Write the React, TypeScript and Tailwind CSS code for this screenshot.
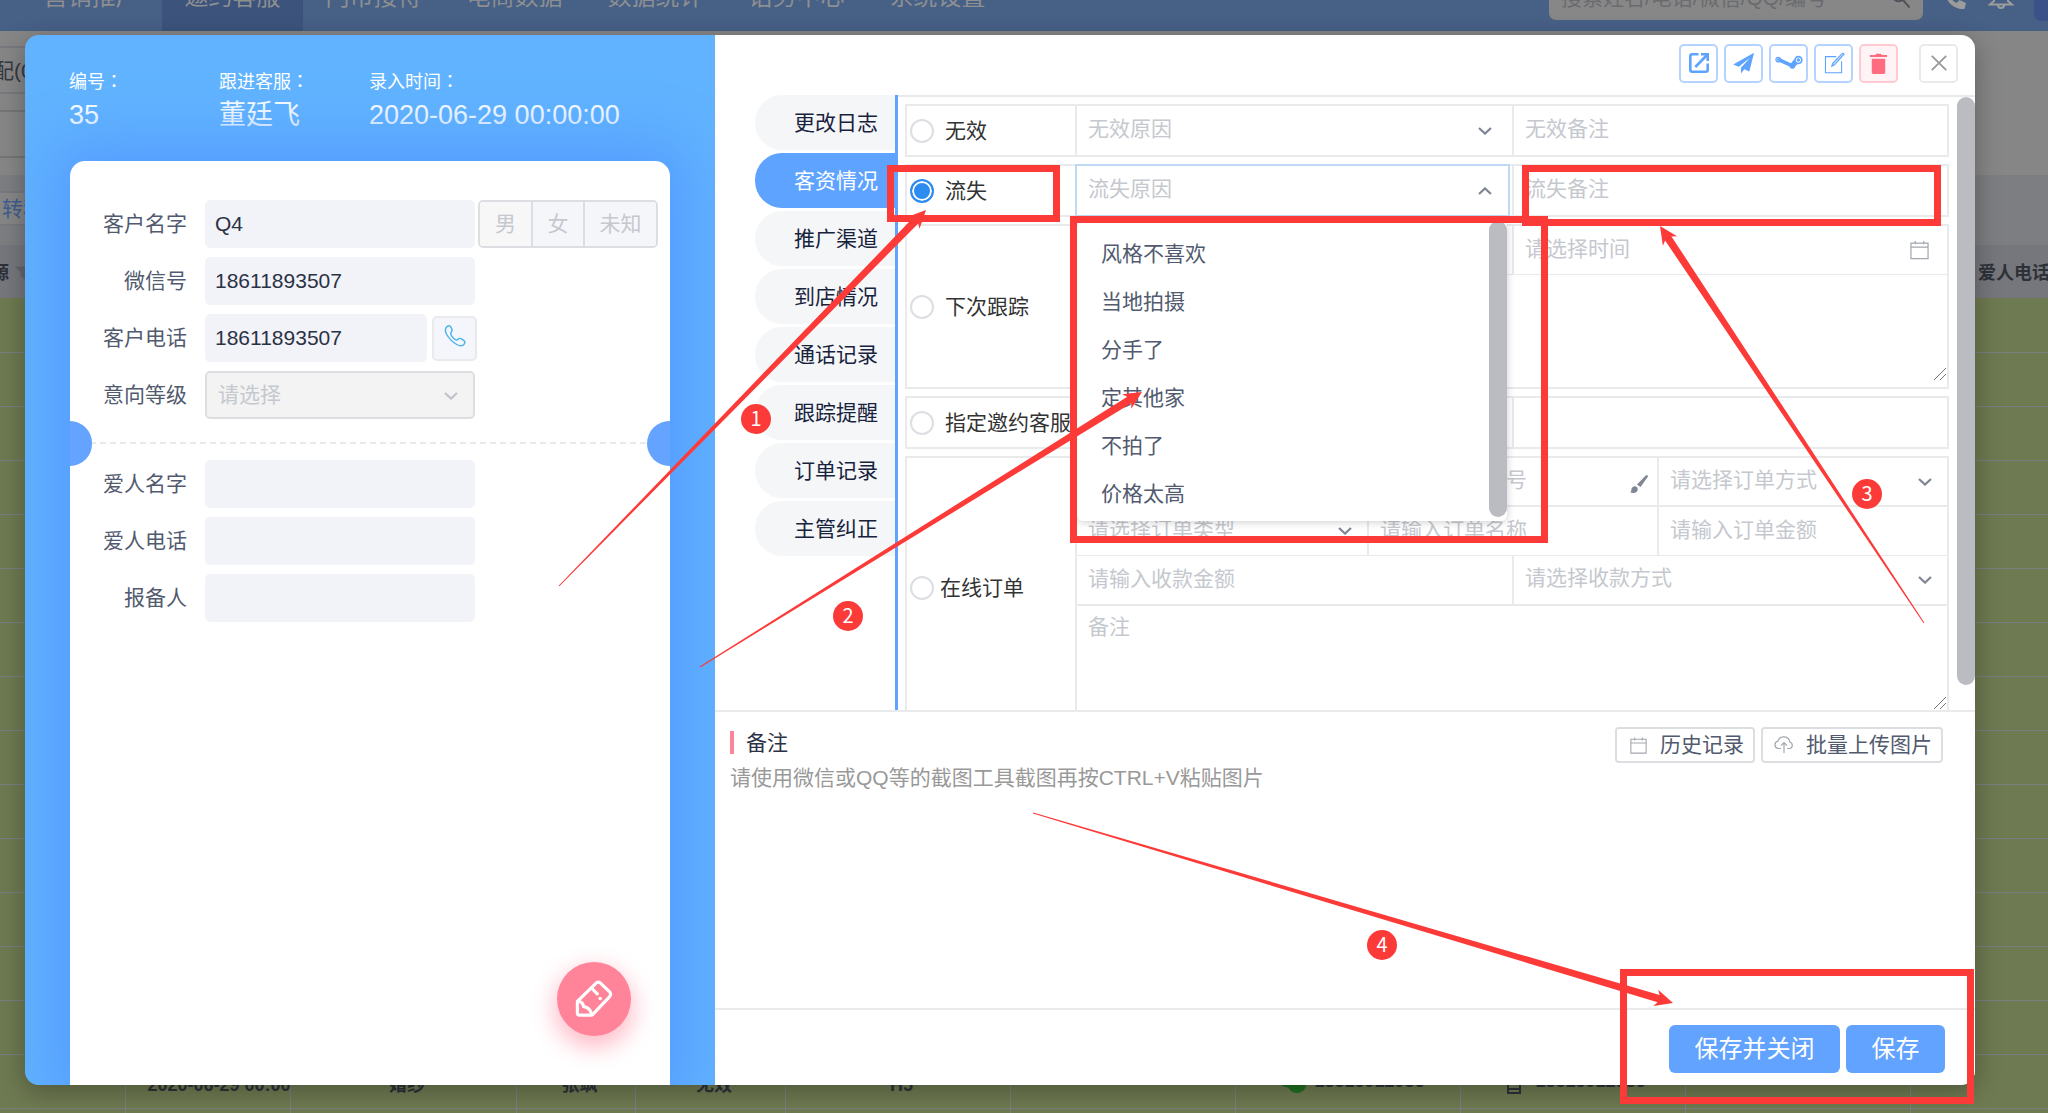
import React, { useState } from "react";

type IconProps = { className?: string };

const OpenIcon = ({ className }: IconProps) => (
  <svg viewBox="0 0 24 24" className={className} fill="none" stroke="currentColor" strokeWidth="2.6">
    <path d="M11.5 3.3H5.3a2 2 0 0 0-2 2v13.4a2 2 0 0 0 2 2h13.4a2 2 0 0 0 2-2v-6.2" />
    <path d="M14 3.3h6.7V10" />
    <path d="M20.5 3.5 8.3 16" />
  </svg>
);
const PlaneIcon = ({ className }: IconProps) => (
  <svg viewBox="0 0 24 24" className={className} fill="currentColor">
    <path d="M23.5.8.8 13.6l6.1 2.5L19.4 6 9.2 17.1v6.4l3.7-4.8 5.5 2.5z" />
  </svg>
);
const SteamIcon = ({ className }: IconProps) => (
  <svg viewBox="0 0 30 16" className={className} fill="none" stroke="currentColor">
    <circle cx="4.2" cy="4.600" r="2.3" strokeWidth="1.200" />
    <circle cx="4.2" cy="4.600" r="1.300" fill="currentColor" stroke="none" />
    <path d="M5.500 3 17 8.300 20 4.500 24 8.500 19.500 13.300 16.500 12 5 6.800z" fill="currentColor" stroke="none" />
    <circle cx="18.4" cy="11" r="2.800" fill="currentColor" stroke="none" />
    <circle cx="24.4" cy="5" r="3.400" strokeWidth="1.700" className="fill-white" />
    <circle cx="24.4" cy="5" r="1.700" fill="currentColor" stroke="none" />
  </svg>
);
const EditIcon = ({ className }: IconProps) => (
  <svg viewBox="0 0 24 24" className={className} fill="none" stroke="currentColor" strokeWidth="1.2">
    <path d="M14.5 5H2.7v17.6h17.6V10" />
    <path d="m9.6 15.4 1-3L21 1.6q1.3-.6 2 .8L12.600 14z" fill="currentColor" fillOpacity=".35" />
  </svg>
);
const TrashIcon = ({ className }: IconProps) => (
  <svg viewBox="0 0 24 24" className={className} fill="currentColor">
    <path d="M5 7h14v14a2 2 0 0 1-2 2H7a2 2 0 0 1-2-2z" />
    <path d="M3 3h5.400L9.800 1.700h4.400L15.600 3H21v2.300H3z" />
  </svg>
);
const CloseIcon = ({ className }: IconProps) => (
  <svg viewBox="0 0 16 16" className={className} fill="none" stroke="currentColor" strokeWidth="1.8">
    <path d="m.8.8 14.400 14.400M15.200.8.8 15.200" />
  </svg>
);
const Chevron = ({ up = false, className = "" }: { up?: boolean; className?: string }) => (
  <svg viewBox="0 0 14 8" className={`pointer-events-none absolute h-[8px] w-[14px] ${className}`} fill="none" stroke="currentColor" strokeWidth="2.2">
    <path d={up ? "M1 7l6-5.600L13 7" : "M1 1l6 5.600L13 1"} />
  </svg>
);
const CalendarIcon = ({ className }: IconProps) => (
  <svg viewBox="0 0 20 20" className={className} fill="none" stroke="currentColor" strokeWidth="1.300">
    <path d="M1 2.700h18v16.300H1zM1 7h18M5.500.5v3.500M14.500.5v3.500" />
  </svg>
);
const UploadIcon = ({ className }: IconProps) => (
  <svg viewBox="0 0 20 18" className={className} fill="none" stroke="currentColor" strokeWidth="1.200">
    <path d="M7 12.500H4.500A3.700 3.700 0 0 1 3.900 5.200 6.200 6.200 0 0 1 15.900 6a3.400 3.400 0 0 1 0 6.500H13" />
    <path d="M10 17V7M7 9.700 10 6.700l3 3" />
  </svg>
);
const PhoneOutline = ({ className }: IconProps) => (
  <svg viewBox="0 0 22 22" className={className} fill="none" stroke="currentColor" strokeWidth="1.400">
    <path d="M3.600 1.200C5.300.2 6.300 1 7.300 2.800 8.400 4.800 8.700 5.600 7.500 6.800 6.300 8 6.200 8.700 7.600 10.900c1.200 1.900 2.400 3 3.800 3.800 1.200.7 1.900.4 2.900-.7.900-1 1.900-.9 3.500.1l2.200 1.500c1.500 1.100 1 2.700-.4 4.100-1.600 1.600-3.900 1.400-6.800-.2C8.600 17.200 4.500 13 2.300 8.800.9 5.600.9 2.900 3.600 1.200z" />
  </svg>
);
const BrushIcon = ({ className }: IconProps) => (
  <svg viewBox="0 0 20 20" className={className} fill="currentColor">
    <path d="M8 10.500 17 1.300q1.700-.6 2.200 1L11.500 13zM1 18.300c1.700-.5 1-2.300 1.700-4 1.300-3 5.300-2.700 6 .300.600 3.600-3.300 5.500-7.700 3.700z" />
  </svg>
);
const PencilIcon = ({ className }: IconProps) => (
  <svg viewBox="0 0 40 40" className={className} fill="none" stroke="currentColor" strokeWidth="3.300" strokeLinejoin="round" strokeLinecap="round">
    <path d="M2.500 22.500 22.500 3q2-1.600 4 0L36.500 12.500q2 2.500 0 5L18 37H4.500q-2 0-2-2z" />
    <path d="M3.500 22.500q5 .5 5.500 5.500 6 .5 8.500 7.500M17.500 8.500l6 6" />
    <circle cx="26.500" cy="19.500" r="1.900" fill="currentColor" stroke="none" />
  </svg>
);
const Grip = () => (
  <svg viewBox="0 0 14 14" className="pointer-events-none absolute right-0 bottom-0 h-[14px] w-[14px] text-[#777]" fill="none" stroke="currentColor" strokeWidth="1">
    <path d="M1 13 13 1M7 13l6-6" />
  </svg>
);

/* ---------- dimmed page behind the dialog ---------- */

const NAV = ["营销推广", "邀约客服", "门市接待", "电商数据", "数据统计", "话务中心", "系统设置"];
const COLS = ["w-[125px]", "w-[165px]", "w-[226px]", "w-[119px]", "w-[150px]", "w-[225px]", "w-[225px]", "w-[225px]", "w-[225px]", "w-[225px]", "w-auto"];

function BackPage() {
  return (
    <div className="flex h-full flex-col bg-[#868686] *:shrink-0">
      <header className="flex h-[31px] items-end justify-between overflow-hidden bg-[#476086] pl-[21px]">
        <nav className="-mt-[38px] flex">
          {NAV.map((n, i) => (
            <a key={n} href="#" className={`flex h-[69px] w-[141px] items-center justify-center text-[24px] text-[#8d8f91] ${i === 1 ? "bg-[#3c547c]" : ""}`}>
              {n}
            </a>
          ))}
        </nav>
        <div className="flex items-end">
          <div className="mb-[11px] flex h-[44px] w-[374px] items-center justify-between rounded-[7px] bg-[#878787] px-[12px]">
            <input aria-label="搜索" placeholder="搜索姓名/电话/微信/QQ/编号" className="w-[300px] text-[21px] placeholder:text-[#696b6e]" />
            <svg viewBox="0 0 20 20" className="h-[19px] w-[19px] text-[#4b4e55]" fill="none" stroke="currentColor" strokeWidth="2">
              <circle cx="7" cy="7" r="6" />
              <path d="m11.500 11.500 7 8" />
            </svg>
          </div>
          <svg viewBox="0 0 24 24" className="mb-[21px] ml-[20px] h-[24px] w-[24px] text-[#9c9c9c]" fill="currentColor">
            <path d="M2 2.500 7 1l3 6-3 3c1 3 3.500 5.500 6.500 7l3-3 6.500 3-1.500 6C10 24 1 14 2 2.500z" />
          </svg>
          <svg viewBox="0 0 24 24" className="mb-[21px] ml-[20px] h-[24px] w-[28px] text-[#9c9c9c]" fill="none" stroke="currentColor" strokeWidth="2">
            <path d="M1 18.500h22L19 15V9a7 7 0 0 0-14 0v6zM9 19a3 3 0 0 0 6 0" />
          </svg>
          <div className="mb-[10px] ml-[19px] h-[44px] w-[14px] rounded-l-[7px] bg-[#3a5288]" />
        </div>
      </header>
      <div className="mr-[100px] h-[63px] border-b-2 border-[#77797c] pt-[15px]">
        <div className="h-full overflow-hidden border-t-2 border-[#77797c] text-[21px] leading-[46px] whitespace-nowrap text-[#35383e]">
          <span className="-ml-[7px]">配(0)</span>
        </div>
      </div>
      <div className="mt-[16px] mr-[100px] h-[48px] border-y-2 border-[#757575]" />
      <div className="mt-[17px] h-[16px] bg-[#7d7e81]" />
      <div className="flex h-[35px]">
        <div className="flex-1 border-y-2 border-[#77797c] pl-[2px] text-[21px] leading-[32px] text-[#3f5d8f]">转移</div>
        <div className="w-[100px] bg-[#7d7e81]" />
      </div>
      <div className="h-[19px] bg-[#7d7e81]" />
      <table className="w-full table-fixed border-collapse text-[18px] font-bold text-[#2d3138]">
        <colgroup>
          {COLS.map((c, i) => (
            <col key={i} className={c} />
          ))}
        </colgroup>
        <thead>
          <tr className="h-[53px] bg-[#76777c]">
            {COLS.map((_, i) => (
              <th key={i} className="overflow-visible p-0 pt-[3px] text-left whitespace-nowrap">
                {i === 0 && (
                  <span className="-ml-[9px] flex items-center gap-[6px]">
                    源
                    <svg viewBox="0 0 20 16" className="h-[14px] w-[16px] text-[#66676b]" fill="currentColor">
                      <path d="M0 0h20l-7 7v9l-6-4V7z" />
                    </svg>
                  </span>
                )}
                {i === 10 && <span className="pl-[68px]">爱人电话</span>}
              </th>
            ))}
          </tr>
        </thead>
        <tbody>
          {Array.from({ length: 16 }, (_, r) => (
            <tr key={r} className="h-[54px] bg-[#6e7a51]">
              {["", "2020-06-29 00:00", "婚纱", "张飒", "无效", "H5", "", "18515912986", "18515912986", "", ""].map((t, i) => (
                <td key={i} className={`overflow-visible border-b border-[#7c7d80] p-0 pt-[8px] text-center whitespace-nowrap ${i === 1 ? "pl-[22px]" : "pl-[8px]"} ${i < 10 ? "border-r" : ""}`}>
                  {r === 14 && (
                    <span className="inline-flex items-center gap-[8px]">
                      {i === 7 && (
                        <svg viewBox="0 0 28 24" className="h-[24px] w-[28px] text-[#206f20]" fill="currentColor">
                          <ellipse cx="10" cy="9" rx="10" ry="8.500" />
                          <ellipse cx="19" cy="15" rx="9" ry="8" />
                        </svg>
                      )}
                      {i === 8 && (
                        <svg viewBox="0 0 14 24" className="mr-[6px] h-[24px] w-[14px] text-[#2d3138]" fill="none" stroke="currentColor" strokeWidth="2">
                          <path d="M1 1h12v22H1zM1 19h12" />
                        </svg>
                      )}
                      {t}
                    </span>
                  )}
                </td>
              ))}
            </tr>
          ))}
        </tbody>
      </table>
    </div>
  );
}

/* ---------- left customer card ---------- */

const FIELD = "h-[48px] rounded-[5px] bg-[#f2f3f8] px-[10px] text-[21px] text-[#2b3245]";

function FormRow({ label, id, children }: { label: string; id: string; children: React.ReactNode }) {
  return (
    <div className="flex h-[48px] items-center">
      <label htmlFor={id} className="w-[117px] shrink-0 text-right text-[21px] text-[#515a6e]">
        {label}
      </label>
      <div className="ml-[18px] flex items-center">{children}</div>
    </div>
  );
}

function CustomerPanel() {
  return (
    <aside className="flex w-[690px] shrink-0 flex-col overflow-hidden rounded-l-[14px] bg-[#61b3ff] pt-[31px] pr-[45px] pl-[44px]">
      <dl className="flex text-white">
        {[
          ["编号", "35"],
          ["跟进客服", "董廷飞"],
          ["录入时间", "2020-06-29 00:00:00"],
        ].map(([k, v]) => (
          <div key={k} className="w-[150px] whitespace-nowrap">
            <dt className="h-[29px] text-[18px] leading-[29px]">
              {k}
              <span className="font-['Noto_Sans_CJK_TC',sans-serif]">：</span>
            </dt>
            <dd className="h-[40px] text-[27px] leading-[40px]">{v}</dd>
          </div>
        ))}
      </dl>
      <div className="relative mt-[26px] ml-px flex-1 rounded-t-[15px] bg-white pt-[39px] shadow-[0_0_55px_20px_#559dff]">
        <div className="flex flex-col gap-[9px]">
          <FormRow label="客户名字" id="name">
            <input id="name" defaultValue="Q4" className={`${FIELD} w-[270px]`} />
            <div className="ml-[3px] flex h-[48px] w-[180px] overflow-hidden rounded-[5px] border-2 border-[#dcdee2] text-[21px] text-[#c5c8ce]">
              <button className="w-[51px] bg-[#f7f7f7]">男</button>
              <button className="w-[54px] border-x-2 border-[#dcdee2] bg-[#f5f6fa]">女</button>
              <button className="flex-1 bg-[#f5f6fa]">未知</button>
            </div>
          </FormRow>
          <FormRow label="微信号" id="wechat">
            <input id="wechat" defaultValue="18611893507" className={`${FIELD} w-[270px]`} />
          </FormRow>
          <FormRow label="客户电话" id="phone">
            <input id="phone" defaultValue="18611893507" className={`${FIELD} w-[222px]`} />
            <button aria-label="拨打" className="ml-[5px] flex h-[45px] w-[45px] items-center justify-center rounded-[5px] border-2 border-[#e8eaec] bg-[#f5f6fb] pb-[4px] text-[#46b4ea]">
              <PhoneOutline className="h-[22px] w-[22px]" />
            </button>
          </FormRow>
          <FormRow label="意向等级" id="level">
            <div className="relative">
              <select id="level" className="h-[48px] w-[270px] appearance-none rounded-[5px] border-2 border-[#dcdee2] bg-[#f3f3f3] px-[11px] text-[21px] text-[#c5c8ce]">
                <option>请选择</option>
              </select>
              <Chevron className="top-[21px] right-[17px] text-[#c0c3c9]" />
            </div>
          </FormRow>
        </div>
        <div className="h-[41px] pt-[23px]">
          <div className="h-[2px] w-full bg-[repeating-linear-gradient(90deg,#e8eaec_0_6px,transparent_6px_10px)]" />
        </div>
        <div className="absolute top-[260px] left-0 h-[45px] w-[22px] rounded-r-full bg-[#64a3ff]" />
        <div className="absolute top-[260px] right-0 h-[45px] w-[23px] rounded-l-full bg-[#64a3ff]" />
        <div className="flex flex-col gap-[9px]">
          <FormRow label="爱人名字" id="lover">
            <input id="lover" className={`${FIELD} w-[270px]`} />
          </FormRow>
          <FormRow label="爱人电话" id="loverPhone">
            <input id="loverPhone" className={`${FIELD} w-[270px]`} />
          </FormRow>
          <FormRow label="报备人" id="reporter">
            <input id="reporter" className={`${FIELD} w-[270px]`} />
          </FormRow>
        </div>
        <button aria-label="编辑" className="absolute right-[39px] bottom-[49px] flex h-[74px] w-[74px] items-center justify-center rounded-full bg-[#ff8399] text-white shadow-[0_9px_24px_2px_#ffb8c5]">
          <PencilIcon className="h-[38px] w-[38px]" />
        </button>
      </div>
    </aside>
  );
}

/* ---------- status form ---------- */

const TABS = ["更改日志", "客资情况", "推广渠道", "到店情况", "通话记录", "跟踪提醒", "订单记录", "主管纠正"];
const OPTIONS = ["风格不喜欢", "当地拍摄", "分手了", "定其他家", "不拍了", "价格太高"];
const LINE = "border-[#e8eaec]";
const TEXT = "text-[21px] placeholder:text-[#c5c8ce]";

function Pick({ label, className = "", arrow = "right-[20px]", up = false }: { label: string; className?: string; arrow?: string; up?: boolean }) {
  return (
    <div className={`relative min-w-0 ${LINE} ${className}`}>
      <select aria-label={label} className="h-full w-full appearance-none bg-transparent px-[11px] pb-[4px] text-[21px] text-[#c5c8ce]">
        <option>{label}</option>
      </select>
      <Chevron up={up} className={`top-[50%] -mt-[4px] text-[#808695] ${arrow}`} />
    </div>
  );
}

function Entry({ label, className = "" }: { label: string; className?: string }) {
  return <input aria-label={label || "备注"} placeholder={label} className={`h-full w-full min-w-0 px-[11px] pb-[3px] ${TEXT} ${LINE} ${className}`} />;
}

function StatusRow({ label, checked, onPick, height, tight = false, children }: { label: string; checked: boolean; onPick: () => void; height: string; tight?: boolean; children: React.ReactNode }) {
  return (
    <div className={`flex shrink-0 border-2 ${LINE} ${height}`}>
      <label className={`flex w-[168px] shrink-0 items-center pl-[3px] text-[21px] whitespace-nowrap text-[#333] ${tight ? "gap-[6px]" : "gap-[11px]"}`}>
        <input
          type="radio"
          name="status"
          checked={checked}
          onChange={onPick}
          className="h-[24px] w-[24px] shrink-0 appearance-none rounded-full border-2 border-[#dcdee2] bg-white checked:border-[#2d8cf0] checked:bg-[#2d8cf0] checked:shadow-[inset_0_0_0_2px_white]"
        />
        {label}
      </label>
      <div className={`min-w-0 flex-1 border-l-2 ${LINE}`}>{children}</div>
    </div>
  );
}

function StatusForm() {
  const [status, setStatus] = useState("流失");
  const row = (label: string) => ({ label, checked: status === label, onPick: () => setStatus(label) });
  return (
    <div className="flex min-h-0 min-w-0 flex-1 overflow-hidden border-t-2 border-[#e8eaec]">
      <div className="flex min-w-0 flex-1 flex-col gap-[7px] pt-[7px] pr-[8px] pl-[7px]">
        <StatusRow {...row("无效")} height="h-[53px]">
          <div className="grid h-full grid-cols-2">
            <Pick label="无效原因" />
            <Entry label="无效备注" className="border-l-2" />
          </div>
        </StatusRow>
        <StatusRow {...row("流失")} height="h-[53px]">
          <div className="grid h-full grid-cols-2">
            <div className="relative grid min-w-0 pr-[4px]">
              <Pick label="流失原因" up arrow="right-[16px]" className="ring-2 ring-[#bfd9f5]" />
              <ul role="listbox" aria-label="流失原因" className="absolute top-[55px] right-[5px] left-0 z-10 h-[300px] rounded-[6px] bg-white pt-[9px] text-[21px] leading-[48px] text-[#515a6e] shadow-[0_1px_9px_rgba(0,0,0,.2)]">
                {OPTIONS.map((o) => (
                  <li key={o} role="option" aria-selected={false} className="px-[24px]">
                    {o}
                  </li>
                ))}
                <li aria-hidden className="absolute top-0 right-0 h-[296px] w-[18px] rounded-full bg-[#bbbcc1]" />
              </ul>
            </div>
            <Entry label="流失备注" className="border-l-2" />
          </div>
        </StatusRow>
        <StatusRow {...row("下次跟踪")} height="h-[165px]">
          <div className={`grid h-[49px] grid-cols-2 border-b ${LINE}`}>
            <Pick label="跟踪方式" />
            <div className={`relative min-w-0 border-l-2 ${LINE}`}>
              <Entry label="请选择时间" />
              <CalendarIcon className="absolute top-[14px] right-[18px] h-[20px] w-[19px] text-[#a3a7b0]" />
            </div>
          </div>
          <div className="relative h-[106px]">
            <textarea aria-label="跟踪备注" className="h-full w-full resize-none px-[11px]" />
            <Grip />
          </div>
        </StatusRow>
        <StatusRow {...row("指定邀约客服")} height="h-[53px]">
          <div className="grid h-full grid-cols-2">
            <Pick label="邀约客服" />
            <Entry label="" className="border-l-2" />
          </div>
        </StatusRow>
        <StatusRow {...row("在线订单")} height="h-[264px]" tight>
          <div className={`grid h-[49px] grid-cols-3 border-b-2 ${LINE}`}>
            <Pick label="请选择套系" />
            <div className={`relative min-w-0 border-l-2 ${LINE}`}>
              <Entry label="请输入订单编号" />
              <BrushIcon className="absolute top-[16px] right-[8px] h-[20px] w-[20px] text-[#808695]" />
            </div>
            <Pick label="请选择订单方式" arrow="right-[15px]" className="border-l-2" />
          </div>
          <div className={`grid h-[49px] grid-cols-3 border-b ${LINE}`}>
            <Pick label="请选择订单类型" arrow="right-[15px]" />
            <Entry label="请输入订单名称" className="border-l-2" />
            <Entry label="请输入订单金额" className="border-l-2" />
          </div>
          <div className={`grid h-[50px] grid-cols-2 border-b-2 ${LINE}`}>
            <Entry label="请输入收款金额" />
            <Pick label="请选择收款方式" arrow="right-[15px]" className="border-l-2" />
          </div>
          <div className="relative h-[104px]">
            <textarea aria-label="备注" placeholder="备注" className={`h-full w-full resize-none px-[11px] pt-[5px] ${TEXT}`} />
            <Grip />
          </div>
        </StatusRow>
      </div>
      <div className="w-[18px] shrink-0">
        <div className="h-[588px] w-full rounded-full bg-[#bbbcc1]" />
      </div>
    </div>
  );
}

const TOOL = "flex h-[39px] w-[39px] items-center justify-center rounded-[5px] border-2";
const BLUE = "border-[#b4d3ff] text-[#5ea3ff]";
const SMALL = "flex h-[36px] items-center justify-between rounded-[4px] border-2 border-[#dcdee2] pr-[9px] text-[21px] text-[#515a6e]";

function DetailPanel() {
  return (
    <section className="flex min-w-0 flex-1 flex-col overflow-hidden rounded-r-[14px] bg-white">
      <div className="flex h-[60px] shrink-0 items-center justify-end gap-[6px] pr-[17px] pb-[4px]">
        <button aria-label="打开" className={`${TOOL} ${BLUE}`}><OpenIcon className="h-[24px] w-[24px]" /></button>
        <button aria-label="发送" className={`${TOOL} ${BLUE}`}><PlaneIcon className="h-[22px] w-[23px]" /></button>
        <button aria-label="分配" className={`${TOOL} ${BLUE}`}><SteamIcon className="h-[16px] w-[30px] shrink-0" /></button>
        <button aria-label="修改" className={`${TOOL} ${BLUE}`}><EditIcon className="h-[22px] w-[22px]" /></button>
        <button aria-label="删除" className={`${TOOL} border-[#ffc9d1] bg-[#fff3f5] text-[#ff6b80]`}><TrashIcon className="h-[23px] w-[23px]" /></button>
        <button aria-label="关闭" className={`${TOOL} ml-[15px] border-[#e8eaec] text-[#999]`}><CloseIcon className="h-[16px] w-[16px]" /></button>
      </div>
      <div className="flex min-h-0 flex-1">
        <div role="tablist" className="flex w-[183px] shrink-0 flex-col gap-[3px] border-r-3 border-[#5ea3ff] pl-[40px]">
          {TABS.map((t, i) => (
            <button
              key={t}
              role="tab"
              aria-selected={i === 1}
              className={`h-[55px] shrink-0 rounded-l-[27px] pr-[17px] text-right text-[21px] ${i === 1 ? "bg-[#5ea3ff] text-white" : "bg-[#f5f6f8] text-[#17233d]"}`}
            >
              {t}
            </button>
          ))}
        </div>
        <StatusForm />
      </div>
      <div className="h-[298px] shrink-0 border-t-2 border-[#e8eaec] pt-[15px] pr-[32px] pl-[15px]">
        <div className="flex h-[36px] justify-between">
          <h2 className="mt-[4px] flex h-[23px] items-center border-l-4 border-[#ff8399] pl-[12px] text-[21px] text-[#2b3245]">备注</h2>
          <div className="flex gap-[6px]">
            <button className={`${SMALL} w-[140px] pl-[13px]`}>
              <CalendarIcon className="h-[17px] w-[17px] text-[#a3a7b0]" />
              历史记录
            </button>
            <button className={`${SMALL} w-[182px] pl-[11px]`}>
              <UploadIcon className="h-[18px] w-[20px] text-[#a3a7b0]" />
              批量上传图片
            </button>
          </div>
        </div>
        <p className="text-[21px] leading-[30px] text-[#999]">请使用微信或QQ等的截图工具截图再按CTRL+V粘贴图片</p>
      </div>
      <footer className="flex h-[77px] shrink-0 justify-end gap-[6px] border-t-2 border-[#e8eaec] pt-[15px] pr-[30px] text-[24px] text-white">
        <button className="h-[48px] w-[171px] rounded-[6px] bg-[#62a3ff]">保存并关闭</button>
        <button className="h-[48px] w-[99px] rounded-[6px] bg-[#62a3ff]">保存</button>
      </footer>
    </section>
  );
}

/* ---------- tutorial marks drawn over the dialog ---------- */

const ARROWS = [
  [559, 586, 926, 210],
  [700, 667, 1142, 392],
  [1924, 623, 1660, 226],
  [1033, 813, 1673, 1003],
];
const BOXES = [
  [887, 165, 173, 57],
  [1070, 216, 478, 327],
  [1522, 165, 419, 61],
  [1620, 969, 354, 135],
];
const BADGES = [
  [756, 419],
  [848, 616],
  [1867, 494],
  [1382, 945],
];

function arrowPoints([x1, y1, x2, y2]: number[]) {
  const len = Math.hypot(x2 - x1, y2 - y1);
  const ux = (x2 - x1) / len;
  const uy = (y2 - y1) / len;
  const at = (back: number, side: number) => `${x2 - ux * back - uy * side},${y2 - uy * back + ux * side}`;
  return [at(len, 0.5), at(15, 3.8), at(18, 8.5), at(0, 0), at(18, -8.5), at(15, -3.8), at(len, -0.5)].join(" ");
}

function Marks() {
  return (
    <svg className="pointer-events-none absolute top-0 left-0 z-20 h-[1113px] w-[2048px]" viewBox="0 0 2048 1113">
      {BOXES.map(([x, y, w, h]) => (
        <rect key={`${x}`} x={x + 3.5} y={y + 3.5} width={w - 7} height={h - 7} fill="none" stroke="#fc3a38" strokeWidth="7" />
      ))}
      {ARROWS.map((a) => (
        <polygon key={a.join()} points={arrowPoints(a)} fill="#fc3a38" />
      ))}
      {BADGES.map(([x, y], i) => (
        <g key={i}>
          <circle cx={x} cy={y} r="15" fill="#fc3a38" />
          <text x={x} y={y + 7} textAnchor="middle" className="fill-white font-['Noto_Sans_CJK_SC',sans-serif] text-[20px]">
            {i + 1}
          </text>
        </g>
      ))}
    </svg>
  );
}

export default function App() {
  return (
    <div className="relative h-screen overflow-hidden font-['Liberation_Sans','Noto_Sans_CJK_SC',sans-serif]">
      <BackPage />
      <div role="dialog" aria-label="客户详情" className="absolute inset-0 flex pt-[35px] pr-[73px] pb-[28px] pl-[25px]">
        <div className="flex min-w-0 flex-1 rounded-[14px] shadow-[0_6px_26px_rgba(0,0,0,.3)]">
          <CustomerPanel />
          <DetailPanel />
        </div>
      </div>
      <Marks />
    </div>
  );
}
